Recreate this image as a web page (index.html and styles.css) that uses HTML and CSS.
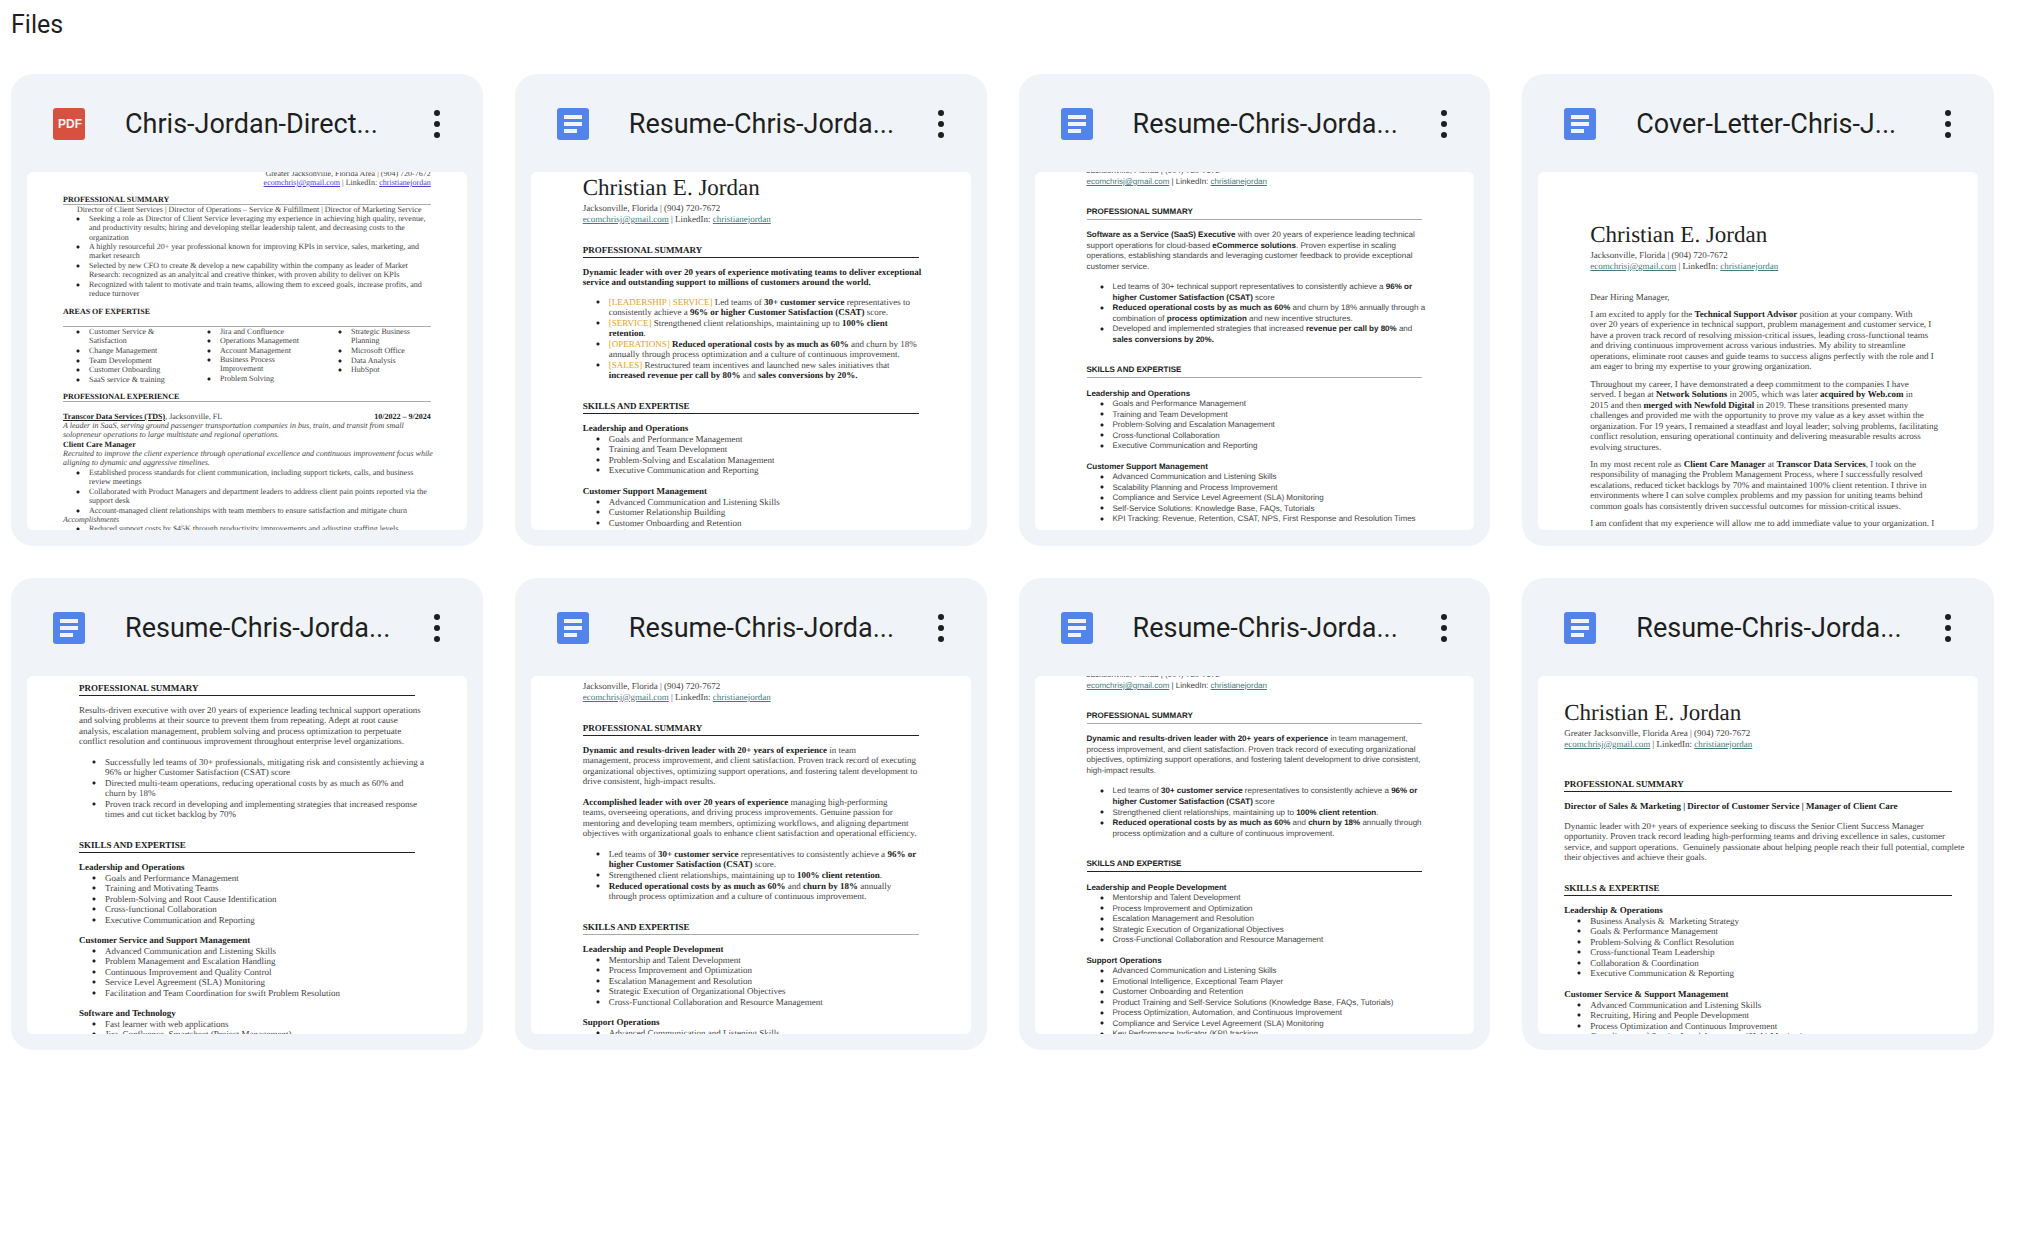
FILE: index.html
```html
<!DOCTYPE html>
<html lang="en">
<head>
<meta charset="utf-8">
<title>Files</title>
<link rel="stylesheet" href="styles.css">
</head>
<body>
<svg class="sprite" aria-hidden="true">
  <symbol id="icon-doc" viewBox="0 0 32 32">
    <rect width="32" height="32" rx="3" fill="#5384ec"/>
    <path fill="#f0f4f9" d="M7 7h18v4H7zM7 14h18v4H7zM7 21h13v4H7z"/>
  </symbol>
  <symbol id="icon-more" viewBox="0 0 24 32">
    <circle cx="12" cy="5" r="3"/><circle cx="12" cy="16" r="3"/><circle cx="12" cy="27" r="3"/>
  </symbol>
</svg>
<main class="files">
<h1 class="files-title">Files</h1>
<div class="grid">

<article class="card">
  <header class="card-head">
    <svg class="type" viewBox="0 0 32 32" role="img" aria-label="PDF"><rect width="32" height="32" rx="3" fill="#d85140"/><text class="pdf-label" x="17" y="20" text-anchor="middle">PDF</text></svg>
    <h2 class="name">Chris-Jordan-Direct...</h2>
    <button class="more" type="button" aria-label="More actions"><svg><use href="#icon-more"/></svg></button>
  </header>
  <div class="preview"><div class="sheet times">
    <p class="contact"><span>Greater Jacksonville, Florida Area | (904) 720-7672</span><span><a href="#">ecomchrisj@gmail.com</a> | LinkedIn: <a href="#">christianejordan</a></span></p>
    <h3 class="light">PROFESSIONAL SUMMARY</h3>
    <p class="roles">Director of Client Services | Director of Operations – Service &amp; Fulfillment | Director of Marketing Service</p>
    <ul>
      <li><span>Seeking a role as Director of Client Service leveraging my experience in achieving high quality, revenue,</span><span>and productivity results; hiring and developing stellar leadership talent, and decreasing costs to the</span><span>organization</span></li>
      <li><span>A highly resourceful 20+ year professional known for improving KPIs in service, sales, marketing, and</span><span>market research</span></li>
      <li><span>Selected by new CFO to create &amp; develop a new capability within the company as leader of Market</span><span>Research: recognized as an analyitcal and creative thinker, with proven ability to deliver on KPIs</span></li>
      <li><span>Recognized with talent to motivate and train teams, allowing them to exceed goals, increase profits, and</span><span>reduce turnover</span></li>
    </ul>
    <h3 class="light spaced">AREAS OF EXPERTISE</h3>
    <div class="columns">
      <ul><li><span>Customer Service &amp;</span><span>Satisfaction</span></li><li>Change Management</li><li>Team Development</li><li>Customer Onboarding</li><li>SaaS service &amp; training</li></ul>
      <ul><li>Jira and Confluence</li><li>Operations Management</li><li>Account Management</li><li><span>Business Process</span><span>Improvement</span></li><li>Problem Solving</li></ul>
      <ul><li><span>Strategic Business</span><span>Planning</span></li><li>Microsoft Office</li><li>Data Analysis</li><li>HubSpot</li></ul>
    </div>
    <h3 class="light">PROFESSIONAL EXPERIENCE</h3>
    <p class="job"><span><b><u>Transcor Data Services (TDS)</u></b>, Jacksonville, FL</span><b>10/2022 – 9/2024</b></p>
    <p><i><span>A leader in SaaS, serving ground passenger transportation companies in bus, train, and transit from small</span><span>solopreneur operations to large multistate and regional operations.</span></i></p>
    <h4>Client Care Manager</h4>
    <p><i><span>Recruited to improve the client experience through operational excellence and continuous improvement focus while</span><span>aligning to dynamic and aggressive timelines.</span></i></p>
    <ul>
      <li><span>Established process standards for client communication, including support tickets, calls, and business</span><span>review meetings</span></li>
      <li><span>Collaborated with Product Managers and department leaders to address client pain points reported via the</span><span>support desk</span></li>
      <li>Account-managed client relationships with team members to ensure satisfaction and mitigate churn</li>
    </ul>
    <p><i>Accomplishments</i></p>
    <ul><li>Reduced support costs by $45K through productivity improvements and adjusting staffing levels</li></ul>
  </div></div>
</article>

<article class="card">
  <header class="card-head">
    <svg class="type" role="img" aria-label="Document"><use href="#icon-doc"/></svg>
    <h2 class="name">Resume-Chris-Jorda...</h2>
    <button class="more" type="button" aria-label="More actions"><svg><use href="#icon-more"/></svg></button>
  </header>
  <div class="preview"><div class="sheet serif from-name">
    <p class="person">Christian E. Jordan</p>
    <p class="contact"><span>Jacksonville, Florida | (904) 720-7672</span><span><a href="#">ecomchrisj@gmail.com</a> | LinkedIn: <a href="#">christianejordan</a></span></p>
    <h3>PROFESSIONAL SUMMARY</h3>
    <p class="tight"><b><span>Dynamic leader with over 20 years of experience motivating teams to deliver exceptional</span><span>service and outstanding support to millions of customers around the world.</span></b></p>
    <ul class="points">
      <li><span><mark>[LEADERSHIP | SERVICE]</mark> Led teams of <b>30+ customer service</b> representatives to</span><span>consistently achieve a <b>96% or higher Customer Satisfaction (CSAT)</b> score.</span></li>
      <li><span><mark>[SERVICE]</mark> Strengthened client relationships, maintaining up to <b>100% client</b></span><span><b>retention</b>.</span></li>
      <li><span><mark>[OPERATIONS]</mark> <b>Reduced operational costs by as much as 60%</b> and churn by 18%</span><span>annually through process optimization and a culture of continuous improvement.</span></li>
      <li><span><mark>[SALES]</mark> Restructured team incentives and launched new sales initiatives that</span><span><b>increased revenue per call by 80%</b> and <b>sales conversions by 20%.</b></span></li>
    </ul>
    <h3>SKILLS AND EXPERTISE</h3>
    <h4>Leadership and Operations</h4>
    <ul><li>Goals and Performance Management</li><li>Training and Team Development</li><li>Problem-Solving and Escalation Management</li><li>Executive Communication and Reporting</li></ul>
    <h4>Customer Support Management</h4>
    <ul><li>Advanced Communication and Listening Skills</li><li>Customer Relationship Building</li><li>Customer Onboarding and Retention</li><li>Product and Service Training</li></ul>
  </div></div>
</article>

<article class="card">
  <header class="card-head">
    <svg class="type" role="img" aria-label="Document"><use href="#icon-doc"/></svg>
    <h2 class="name">Resume-Chris-Jorda...</h2>
    <button class="more" type="button" aria-label="More actions"><svg><use href="#icon-more"/></svg></button>
  </header>
  <div class="preview"><div class="sheet sans">
    <p class="contact"><span>Jacksonville, Florida | (904) 720-7672</span><span><a href="#">ecomchrisj@gmail.com</a> | LinkedIn: <a href="#">christianejordan</a></span></p>
    <h3 class="light">PROFESSIONAL SUMMARY</h3>
    <p><span><b>Software as a Service (SaaS) Executive</b> with over 20 years of experience leading technical</span><span>support operations for cloud-based <b>eCommerce solutions</b>. Proven expertise in scaling</span><span>operations, establishing standards and leveraging customer feedback to provide exceptional</span><span>customer service.</span></p>
    <ul class="points">
      <li><span>Led teams of 30+ technical support representatives to consistently achieve a <b>96% or</b></span><span><b>higher Customer Satisfaction (CSAT)</b> score</span></li>
      <li><span><b>Reduced operational costs by as much as 60%</b> and churn by 18% annually through a</span><span>combination of <b>process optimization</b> and new incentive structures.</span></li>
      <li><span>Developed and implemented strategies that increased <b>revenue per call by 80%</b> and</span><span><b>sales conversions by 20%.</b></span></li>
    </ul>
    <h3 class="light">SKILLS AND EXPERTISE</h3>
    <h4>Leadership and Operations</h4>
    <ul><li>Goals and Performance Management</li><li>Training and Team Development</li><li>Problem-Solving and Escalation Management</li><li>Cross-functional Collaboration</li><li>Executive Communication and Reporting</li></ul>
    <h4>Customer Support Management</h4>
    <ul><li>Advanced Communication and Listening Skills</li><li>Scalability Planning and Process Improvement</li><li>Compliance and Service Level Agreement (SLA) Monitoring</li><li>Self-Service Solutions: Knowledge Base, FAQs, Tutorials</li><li>KPI Tracking: Revenue, Retention, CSAT, NPS, First Response and Resolution Times</li></ul>
  </div></div>
</article>

<article class="card">
  <header class="card-head">
    <svg class="type" role="img" aria-label="Document"><use href="#icon-doc"/></svg>
    <h2 class="name">Cover-Letter-Chris-J...</h2>
    <button class="more" type="button" aria-label="More actions"><svg><use href="#icon-more"/></svg></button>
  </header>
  <div class="preview"><div class="sheet serif letter">
    <p class="person">Christian E. Jordan</p>
    <p class="contact"><span>Jacksonville, Florida | (904) 720-7672</span><span><a href="#">ecomchrisj@gmail.com</a> | LinkedIn: <a href="#">christianejordan</a></span></p>
    <p>Dear Hiring Manager,</p>
    <p><span>I am excited to apply for the <b>Technical Support Advisor</b> position at your company. With</span><span>over 20 years of experience in technical support, problem management and customer service, I</span><span>have a proven track record of resolving mission-critical issues, leading cross-functional teams</span><span>and driving continuous improvement across various industries. My ability to streamline</span><span>operations, eliminate root causes and guide teams to success aligns perfectly with the role and I</span><span>am eager to bring my expertise to your growing organization.</span></p>
    <p><span>Throughout my career, I have demonstrated a deep commitment to the companies I have</span><span>served. I began at <b>Network Solutions</b> in 2005, which was later <b>acquired by Web.com</b> in</span><span>2015 and then <b>merged with Newfold Digital</b> in 2019. These transitions presented many</span><span>challenges and provided me with the opportunity to prove my value as a key asset within the</span><span>organization. For 19 years, I remained a steadfast and loyal leader; solving problems, facilitating</span><span>conflict resolution, ensuring operational continuity and delivering measurable results across</span><span>evolving structures.</span></p>
    <p><span>In my most recent role as <b>Client Care Manager</b> at <b>Transcor Data Services</b>, I took on the</span><span>responsibility of managing the Problem Management Process, where I successfully resolved</span><span>escalations, reduced ticket backlogs by 70% and maintained 100% client retention. I thrive in</span><span>environments where I can solve complex problems and my passion for uniting teams behind</span><span>common goals has consistently driven successful outcomes for mission-critical issues.</span></p>
    <p>I am confident that my experience will allow me to add immediate value to your organization. I</p>
  </div></div>
</article>

<article class="card">
  <header class="card-head">
    <svg class="type" role="img" aria-label="Document"><use href="#icon-doc"/></svg>
    <h2 class="name">Resume-Chris-Jorda...</h2>
    <button class="more" type="button" aria-label="More actions"><svg><use href="#icon-more"/></svg></button>
  </header>
  <div class="preview"><div class="sheet serif from-summary">
    <h3>PROFESSIONAL SUMMARY</h3>
    <p><span>Results-driven executive with over 20 years of experience leading technical support operations</span><span>and solving problems at their source to prevent them from repeating. Adept at root cause</span><span>analysis, escalation management, problem solving and process optimization to perpetuate</span><span>conflict resolution and continuous improvement throughout enterprise level organizations.</span></p>
    <ul class="points">
      <li><span>Successfully led teams of 30+ professionals, mitigating risk and consistently achieving a</span><span>96% or higher Customer Satisfaction (CSAT) score</span></li>
      <li><span>Directed multi-team operations, reducing operational costs by as much as 60% and</span><span>churn by 18%</span></li>
      <li><span>Proven track record in developing and implementing strategies that increased response</span><span>times and cut ticket backlog by 70%</span></li>
    </ul>
    <h3>SKILLS AND EXPERTISE</h3>
    <h4>Leadership and Operations</h4>
    <ul><li>Goals and Performance Management</li><li>Training and Motivating Teams</li><li>Problem-Solving and Root Cause Identification</li><li>Cross-functional Collaboration</li><li>Executive Communication and Reporting</li></ul>
    <h4>Customer Service and Support Management</h4>
    <ul><li>Advanced Communication and Listening Skills</li><li>Problem Management and Escalation Handling</li><li>Continuous Improvement and Quality Control</li><li>Service Level Agreement (SLA) Monitoring</li><li>Facilitation and Team Coordination for swift Problem Resolution</li></ul>
    <h4>Software and Technology</h4>
    <ul><li>Fast learner with web applications</li><li>Jira, Confluence, Smartsheet (Project Management)</li></ul>
  </div></div>
</article>

<article class="card">
  <header class="card-head">
    <svg class="type" role="img" aria-label="Document"><use href="#icon-doc"/></svg>
    <h2 class="name">Resume-Chris-Jorda...</h2>
    <button class="more" type="button" aria-label="More actions"><svg><use href="#icon-more"/></svg></button>
  </header>
  <div class="preview"><div class="sheet serif from-contact">
    <p class="contact"><span>Jacksonville, Florida | (904) 720-7672</span><span><a href="#">ecomchrisj@gmail.com</a> | LinkedIn: <a href="#">christianejordan</a></span></p>
    <h3>PROFESSIONAL SUMMARY</h3>
    <p><span><b>Dynamic and results-driven leader with 20+ years of experience</b> in team</span><span>management, process improvement, and client satisfaction. Proven track record of executing</span><span>organizational objectives, optimizing support operations, and fostering talent development to</span><span>drive consistent, high-impact results.</span></p>
    <p><span><b>Accomplished leader with over 20 years of experience</b> managing high-performing</span><span>teams, overseeing operations, and driving process improvements. Genuine passion for</span><span>mentoring and developing team members, optimizing workflows, and aligning department</span><span>objectives with organizational goals to enhance client satisfaction and operational efficiency.</span></p>
    <ul class="points">
      <li><span>Led teams of <b>30+ customer service</b> representatives to consistently achieve a <b>96% or</b></span><span><b>higher Customer Satisfaction (CSAT)</b> score.</span></li>
      <li>Strengthened client relationships, maintaining up to <b>100% client retention</b>.</li>
      <li><span><b>Reduced operational costs by as much as 60%</b> and <b>churn by 18%</b> annually</span><span>through process optimization and a culture of continuous improvement.</span></li>
    </ul>
    <h3 class="light">SKILLS AND EXPERTISE</h3>
    <h4>Leadership and People Development</h4>
    <ul><li>Mentorship and Talent Development</li><li>Process Improvement and Optimization</li><li>Escalation Management and Resolution</li><li>Strategic Execution of Organizational Objectives</li><li>Cross-Functional Collaboration and Resource Management</li></ul>
    <h4>Support Operations</h4>
    <ul><li>Advanced Communication and Listening Skills</li></ul>
  </div></div>
</article>

<article class="card">
  <header class="card-head">
    <svg class="type" role="img" aria-label="Document"><use href="#icon-doc"/></svg>
    <h2 class="name">Resume-Chris-Jorda...</h2>
    <button class="more" type="button" aria-label="More actions"><svg><use href="#icon-more"/></svg></button>
  </header>
  <div class="preview"><div class="sheet sans">
    <p class="contact"><span>Jacksonville, Florida | (904) 720-7672</span><span><a href="#">ecomchrisj@gmail.com</a> | LinkedIn: <a href="#">christianejordan</a></span></p>
    <h3 class="light">PROFESSIONAL SUMMARY</h3>
    <p><span><b>Dynamic and results-driven leader with 20+ years of experience</b> in team management,</span><span>process improvement, and client satisfaction. Proven track record of executing organizational</span><span>objectives, optimizing support operations, and fostering talent development to drive consistent,</span><span>high-impact results.</span></p>
    <ul class="points">
      <li><span>Led teams of <b>30+ customer service</b> representatives to consistently achieve a <b>96% or</b></span><span><b>higher Customer Satisfaction (CSAT)</b> score</span></li>
      <li>Strengthened client relationships, maintaining up to <b>100% client retention</b>.</li>
      <li><span><b>Reduced operational costs by as much as 60%</b> and <b>churn by 18%</b> annually through</span><span>process optimization and a culture of continuous improvement.</span></li>
    </ul>
    <h3>SKILLS AND EXPERTISE</h3>
    <h4>Leadership and People Development</h4>
    <ul><li>Mentorship and Talent Development</li><li>Process Improvement and Optimization</li><li>Escalation Management and Resolution</li><li>Strategic Execution of Organizational Objectives</li><li>Cross-Functional Collaboration and Resource Management</li></ul>
    <h4>Support Operations</h4>
    <ul><li>Advanced Communication and Listening Skills</li><li>Emotional Intelligence, Exceptional Team Player</li><li>Customer Onboarding and Retention</li><li>Product Training and Self-Service Solutions (Knowledge Base, FAQs, Tutorials)</li><li>Process Optimization, Automation, and Continuous Improvement</li><li>Compliance and Service Level Agreement (SLA) Monitoring</li><li>Key Performance Indicator (KPI) tracking</li></ul>
  </div></div>
</article>

<article class="card">
  <header class="card-head">
    <svg class="type" role="img" aria-label="Document"><use href="#icon-doc"/></svg>
    <h2 class="name">Resume-Chris-Jorda...</h2>
    <button class="more" type="button" aria-label="More actions"><svg><use href="#icon-more"/></svg></button>
  </header>
  <div class="preview"><div class="sheet serif wide">
    <p class="person">Christian E. Jordan</p>
    <p class="contact"><span>Greater Jacksonville, Florida Area | (904) 720-7672</span><span><a href="#">ecomchrisj@gmail.com</a> | LinkedIn: <a href="#">christianejordan</a></span></p>
    <h3>PROFESSIONAL SUMMARY</h3>
    <p><b>Director of Sales &amp; Marketing | Director of Customer Service | Manager of Client Care</b></p>
    <p><span>Dynamic leader with 20+ years of experience seeking to discuss the Senior Client Success Manager</span><span>opportunity. Proven track record leading high-performing teams and driving excellence in sales, customer</span><span>service, and support operations.&nbsp; Genuinely passionate about helping people reach their full potential, complete</span><span>their objectives and achieve their goals.</span></p>
    <h3>SKILLS &amp; EXPERTISE</h3>
    <h4>Leadership &amp; Operations</h4>
    <ul><li>Business Analysis &amp;&nbsp; Marketing Strategy</li><li>Goals &amp; Performance Management</li><li>Problem-Solving &amp; Conflict Resolution</li><li>Cross-functional Team Leadership</li><li>Collaboration &amp; Coordination</li><li>Executive Communication &amp; Reporting</li></ul>
    <h4>Customer Service &amp; Support Management</h4>
    <ul><li>Advanced Communication and Listening Skills</li><li>Recruiting, Hiring and People Development</li><li>Process Optimization and Continuous Improvement</li><li>Compliance and Service Level Agreement (SLA) Monitoring</li></ul>
  </div></div>
</article>

</div>
</main>
</body>
</html>
```
FILE: styles.css
```css
* { box-sizing: border-box; }
body { margin: 0; background: #fff; color: #1f1f1f; font-family: Roboto, "Open Sans", sans-serif; }
h1, h2, h3, h4, p, ul { margin: 0; padding: 0; }
.sprite { display: none; }

.files { padding: 9px 36px 32px 11px; }
.files-title { margin-bottom: 33px; font-size: 25px; line-height: 32px; font-weight: 400; }
.grid { display: grid; grid-template-columns: repeat(4, minmax(0, 1fr)); gap: 32px; }

.card { display: flex; flex-direction: column; aspect-ratio: 1; padding: 0 16px 16px; border-radius: 22px; background: #f0f4f9; }
.card-head { display: flex; align-items: center; padding: 34px 18px 32px 26px; }
.type { flex: none; width: 32px; height: 32px; }
.pdf-label { font: 700 12px "Liberation Sans", sans-serif; fill: #f0f4f9; }
.name { flex: 1; min-width: 0; margin-left: 40px; overflow: hidden; font-size: 27px; line-height: 32px; font-weight: 400; white-space: nowrap; }
.more { flex: none; width: 24px; height: 32px; padding: 0; border: 0; background: none; cursor: pointer; }
.more svg { display: block; width: 24px; height: 32px; fill: #1f1f1f; }
.preview { flex: 1; min-height: 0; overflow: hidden; border-radius: 6px; background: #fff; }

/* Document thumbnails */
.sheet { padding: 0 52px; color: #444; line-height: 10px; white-space: nowrap; text-rendering: geometricPrecision; }
.sheet span { display: block; line-height: 10px; }
.sheet span:nth-child(even) { line-height: 11px; }
.sheet b, .sheet h3, .sheet h4 { color: #222; font-weight: 700; }
.sheet a { color: #447a80; }
.sheet mark { background: none; color: #e5a526; }
.sheet p + p, .points { margin-top: 10px; }
.sheet h3 { margin: 20px 0 9px; padding-bottom: 2px; border-bottom: 1px solid #222; font-size: 9px; line-height: 10px; }
.sheet h3.light { border-bottom-color: #aaa; }
.sheet h4 { font-size: 9px; line-height: 11px; }
.sheet ul { padding-left: 13px; list-style: none; }
.sheet li { padding-left: 13px; background: radial-gradient(circle at 2px 5px, #222 1px, transparent 2px) no-repeat; }
.sheet li:nth-child(even) { line-height: 11px; }
.sheet ul + h4 { margin-top: 10px; }
.sheet .contact span { line-height: 11px; }
.sheet .person { color: #222; font-size: 23px; line-height: 24px; }
.sheet .person + .contact { margin-top: 3px; }

.serif { font-family: "Liberation Serif", serif; font-size: 9px; }
.from-name { padding-top: 4px; }
.from-name .points { margin-top: 9px; }
.from-contact { padding-top: 5px; }
.from-summary { padding-top: 7px; }
.sheet.from-summary h3:first-child { margin-top: 0; }
.letter { padding-top: 51px; }
.letter .contact { margin-bottom: 20px; }
.letter .contact ~ p + p { margin-top: 7px; }
.wide { padding: 25px 26px 0; }
.wide .contact { margin-bottom: 29px; }

.sans { margin-top: -7px; font-family: "Liberation Sans", sans-serif; font-size: 8px; }
.sheet.sans h3 { margin-bottom: 10px; font-size: 8px; }
.sheet.sans h4 { font-size: 8px; }

.times { margin-top: -3px; padding: 0 36px; font-family: "Liberation Serif", serif; font-size: 8px; line-height: 9px; }
.sheet.times span { line-height: 9px; }
.sheet.times span:nth-child(even) { line-height: 10px; }
.sheet.times .contact { text-align: right; }
.sheet.times .contact span { line-height: 9px; }
.sheet.times a { color: #4a3fd8; }
.sheet.times p + p { margin-top: 0; }
.sheet.times h3 { margin: 8px 0 0; padding-bottom: 0; font-size: 8px; line-height: 9px; }
.sheet.times h3.spaced { padding-bottom: 10px; }
.sheet.times h4 { margin-top: 0; font-size: 8px; line-height: 9px; }
.sheet.times li:nth-child(even) { line-height: 10px; }
.sheet.times .roles { padding-left: 14px; }
.sheet.times .job { display: flex; justify-content: space-between; margin-top: 10px; }
.columns { display: grid; grid-template-columns: repeat(3, 131px); }
```
